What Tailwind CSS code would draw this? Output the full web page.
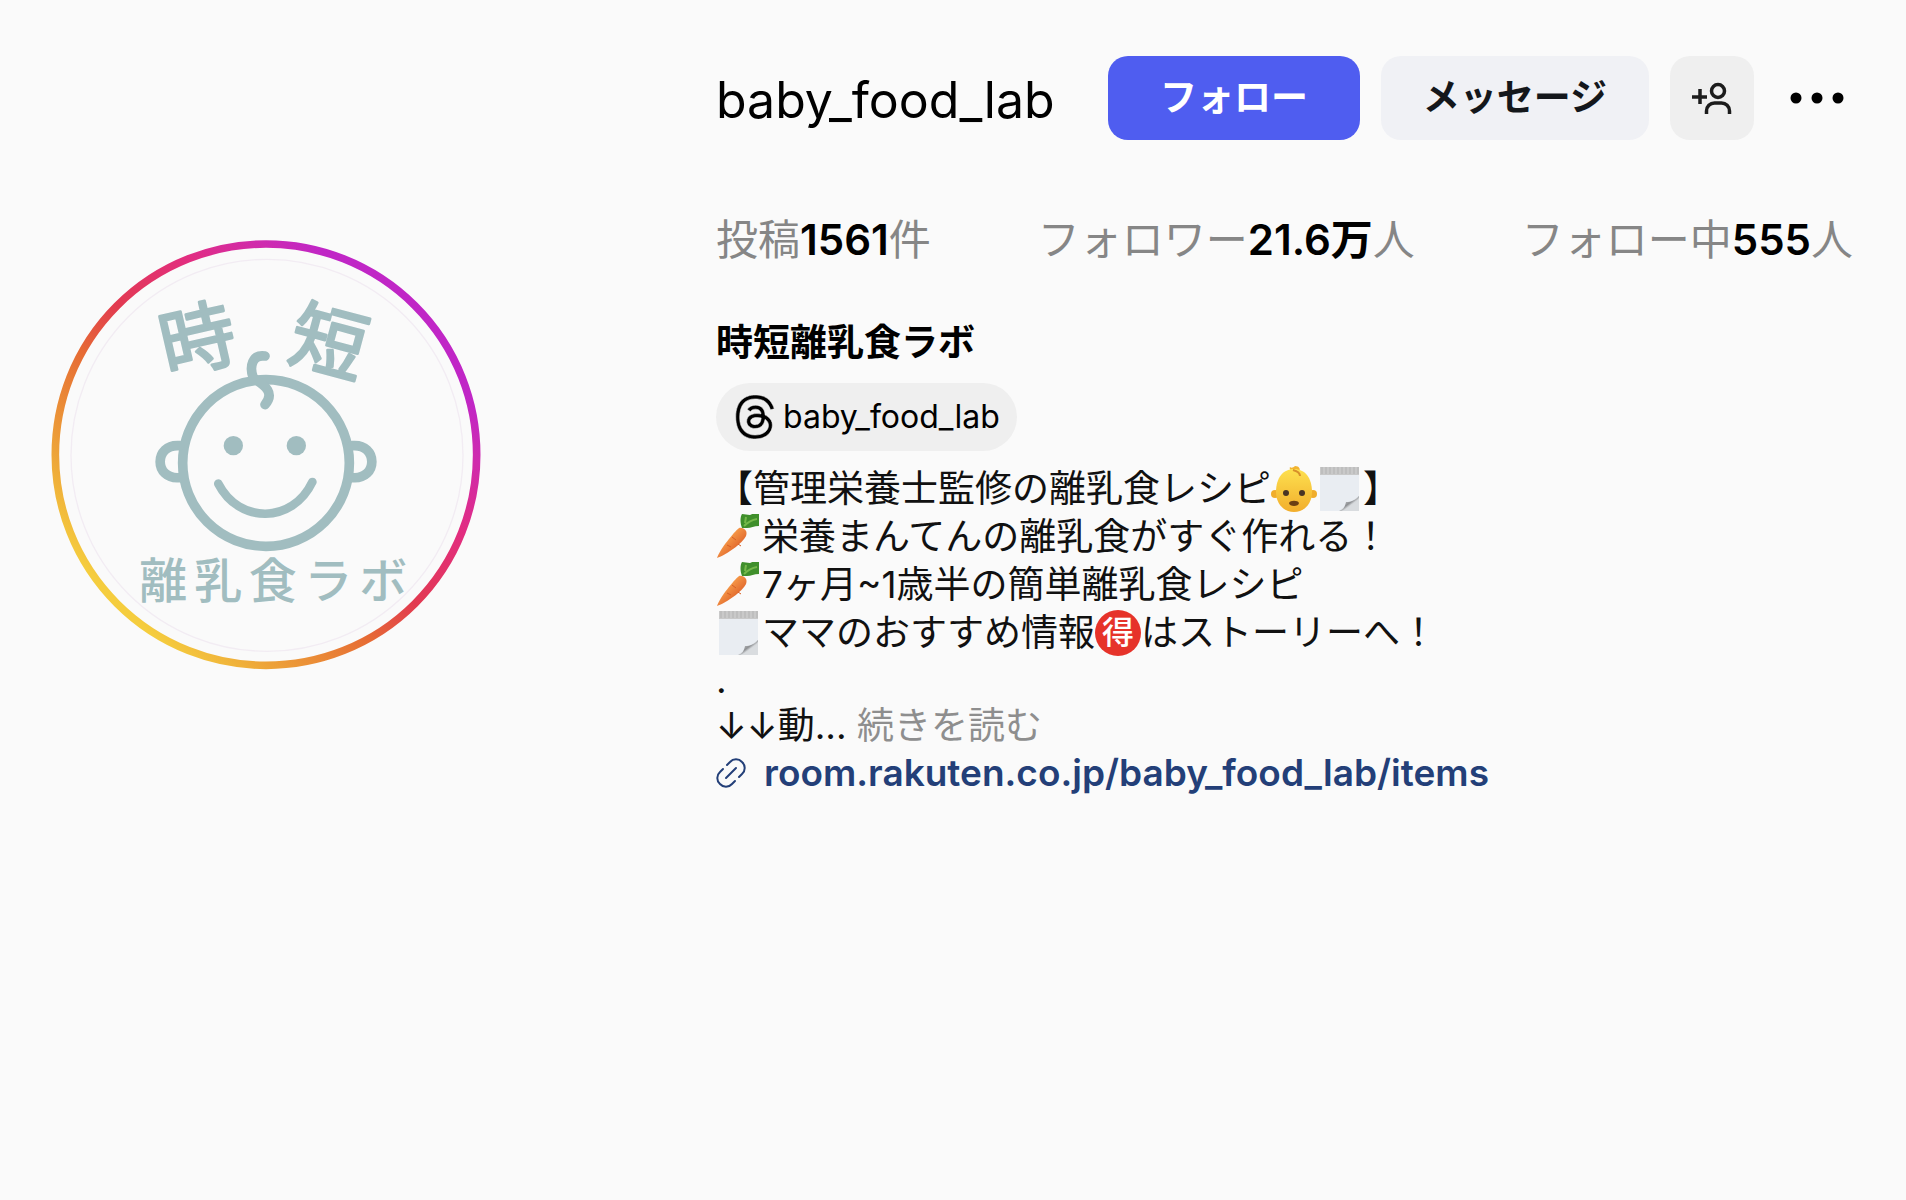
<!DOCTYPE html>
<html lang="ja">
<head>
  <meta charset="UTF-8">
  <meta name="viewport" content="width=device-width, initial-scale=1.0">
  <title>時短離乳食ラボ (@baby_food_lab)</title>
  <script src="https://cdn.jsdelivr.net/npm/@tailwindcss/browser@4"></script>
</head>
<body class="bg-[#fafafa] text-black min-h-screen font-['Inter','Noto_Sans_CJK_JP',sans-serif]">

  <!-- Shared icons -->
  <svg width="0" height="0" class="absolute" aria-hidden="true">
    <defs>
      <linearGradient id="carrotBody" x1="0" y1="0" x2="1" y2="1">
        <stop offset="0.3" stop-color="#f9a04c" />
        <stop offset="0.7" stop-color="#e0662c" />
      </linearGradient>
      <linearGradient id="babySkin" x1="0" y1="0" x2="0" y2="1">
        <stop offset="0" stop-color="#fde04f" />
        <stop offset="1" stop-color="#f2ae2c" />
      </linearGradient>
      <linearGradient id="curl" x1="0" y1="0" x2="1" y2="1">
        <stop offset="0" stop-color="#ffffff" />
        <stop offset="0.5" stop-color="#8e9093" />
        <stop offset="0.6" stop-color="#d5d8db" />
      </linearGradient>
      <symbol id="carrot" viewBox="0 0 46 46">
        <path d="M1 44C4 35 18 18 23 14c5-1 9 3 7 8C27 29 10 41 1 44Z" fill="url(#carrotBody)" />
        <path d="M16 23l4 3M11 31l4 2M22 30l3 2" stroke="#d65f26" stroke-width="1" />
        <path d="M26 14C24 9 24 3 26 0c3 0 5 1 8 1 3-2 6-1 9-1v12c-5 0-8 2-12 2Z" fill="#3f8f2b" />
        <path d="M28 12c3-3 7-6 13-7M29 9l1-6" stroke="#75b84a" stroke-width="2" fill="none" />
      </symbol>
      <symbol id="notepad" viewBox="0 0 46 46">
        <path d="M3 1h39v44H3Z" fill="#e9edf2" />
        <path d="M3 1h39v8H3Z" fill="#c9c9c9" />
        <path d="M5 1v7M9 1v7M13 1v7M17 1v7M21 1v7M25 1v7M29 1v7M33 1v7M37 1v7M41 1v7" stroke="#b3b3b3" stroke-width="1" />
        <path d="M42 30v15H22Z" fill="#d9dcdf" />
        <path d="M22 45c5-1 6-5 7-9 5 0 10-2 13-6 0 4-2 6-6 8-4 3-8 7-14 7Z" fill="url(#curl)" />
      </symbol>
      <symbol id="baby" viewBox="0 0 46 46">
        <path d="M23 5c-3 0-5-2-4-4 1 1 3 1 5-1 4 0 6 3 4 6Z" fill="#f2b430" />
        <circle cx="4" cy="28" r="4" fill="#f0ad2c" />
        <circle cx="42" cy="28" r="4" fill="#f0ad2c" />
        <path d="M23 3c11 0 18 9 18 23 0 12-8 20-18 20S5 38 5 26C5 12 12 3 23 3Z" fill="url(#babySkin)" />
        <path d="M22 4c4 1 7 3 7 6" stroke="#d8902a" stroke-width="2" fill="none" />
        <ellipse cx="15" cy="27" rx="3" ry="3" fill="#4a3424" />
        <ellipse cx="31" cy="27" rx="3" ry="3" fill="#4a3424" />
        <path d="M18 37c1-3 9-3 10 0 0 4-10 4-10 0Z" fill="#6b3f14" />
      </symbol>
    </defs>
  </svg>

  <main class="grid grid-cols-[665px_1fr] pt-14 pl-[51px] pr-[53px]">

    <!-- Avatar with story ring -->
    <a href="#" class="block mt-[184px]">
      <svg viewBox="36 60 1290 1290" class="size-[430px]" role="img" aria-label="時短離乳食ラボのプロフィール写真">
        <defs>
          <linearGradient id="storyRing" x1="0.15" y1="0.85" x2="0.85" y2="0.15">
            <stop offset="0" stop-color="#f5cd3e" />
            <stop offset="0.15" stop-color="#eda238" />
            <stop offset="0.36" stop-color="#e66b34" />
            <stop offset="0.5" stop-color="#e23a50" />
            <stop offset="0.7" stop-color="#e22d80" />
            <stop offset="0.85" stop-color="#cf2bae" />
            <stop offset="0.94" stop-color="#c026c6" />
          </linearGradient>
        </defs>
        <circle cx="681" cy="704" r="632" fill="none" stroke="url(#storyRing)" stroke-width="23" />
        <circle cx="684" cy="706" r="588" fill="none" stroke="#f2ecf3" stroke-width="4" />
        <g fill="none" stroke="#a1bdc0" stroke-width="29" stroke-linecap="round">
          <circle cx="681" cy="729" r="250" />
          <path d="M422 677C344 670 344 780 422 773" />
          <path d="M940 677C1018 670 1018 780 940 773" />
          <path d="M678 408C640 402 630 440 643 474 668 492 712 514 678 554" />
          <path d="M538 791C600 912 760 912 820 786" stroke-width="26" />
        </g>
        <circle cx="583" cy="677" r="29" fill="#a1bdc0" />
        <circle cx="772" cy="677" r="29" fill="#a1bdc0" />
        <g fill="#a1bdc0" text-anchor="middle" class="font-['Noto_Sans_CJK_JP',sans-serif]">
          <g class="font-normal" font-size="226" stroke="#a1bdc0" stroke-width="8" stroke-linejoin="round">
            <text x="476" y="440" transform="rotate(-13 476 358)">時</text>
            <text x="870" y="447" transform="rotate(15 870 366)">短</text>
          </g>
          <g class="font-medium" font-size="144">
            <text x="373" y="1134">離</text>
            <text x="538" y="1134">乳</text>
            <text x="701" y="1134">食</text>
            <text x="868" y="1134">ラ</text>
            <text x="1033" y="1134">ボ</text>
          </g>
        </g>
      </svg>
    </a>

    <section>
      <!-- Username and actions -->
      <div class="flex items-center justify-between">
        <h1 class="pt-1 text-[50px] leading-[60px]">baby_food_lab</h1>
        <div class="flex items-center gap-[21px]">
          <button type="button" class="w-[252px] h-[84px] rounded-[20px] bg-[#4f5df0] text-white text-[37px] font-bold">フォロー</button>
          <button type="button" class="w-[268px] h-[84px] rounded-[20px] bg-[#f0f1f5] text-[#14171b] text-[37px] font-bold">メッセージ</button>
          <button type="button" aria-label="おすすめのアカウント" class="size-[84px] rounded-[20px] bg-[#efefef] flex items-center justify-center">
            <svg viewBox="0 0 40 36" class="w-10 h-9" fill="none" stroke="#1c1c1c" stroke-width="3.5">
              <path d="M0 17h15M8 9v15" />
              <circle cx="26" cy="11" r="6.5" />
              <path d="M14.5 34v-3a8 8 0 0 1 8-8h7a8 8 0 0 1 8 8v3" />
            </svg>
          </button>
          <button type="button" aria-label="オプション" class="w-[78px] h-[84px] pl-[6px] flex items-center justify-center">
            <svg viewBox="0 0 54 12" class="w-[54px] h-3">
              <circle cx="6" cy="6" r="5.5" />
              <circle cx="27" cy="6" r="5.5" />
              <circle cx="48" cy="6" r="5.5" />
            </svg>
          </button>
        </div>
      </div>

      <!-- Counts -->
      <ul class="flex justify-between mt-[75px] text-[42px] leading-[50px] text-[#868686]">
        <li>投稿<span class="font-semibold text-black">1561</span>件</li>
        <li><a href="#">フォロワー<span class="font-semibold text-black">21.6万</span>人</a></li>
        <li><a href="#">フォロー中<span class="font-semibold text-black">555</span>人</a></li>
      </ul>

      <!-- Bio -->
      <h2 class="mt-[54px] text-[37px] leading-12 font-bold">時短離乳食ラボ</h2>
      <a href="#" class="mt-4 inline-flex items-center gap-[6px] h-[68px] px-[17px] rounded-full bg-[#efefef] text-[32px]">
        <svg viewBox="0 0 16 16" class="size-11" stroke="#efefef" stroke-width="0.2" aria-hidden="true">
          <path d="M6.321 6.016c-.27-.18-1.166-.802-1.166-.802.756-1.081 1.753-1.502 3.132-1.502.975 0 1.803.327 2.394.948s.928 1.509 1.005 2.644q.492.207.905.484c1.109.745 1.719 1.86 1.719 3.137 0 2.716-2.226 5.075-6.256 5.075C4.594 16 1 13.987 1 7.994 1 2.034 4.482 0 8.044 0 9.69 0 13.55.243 15 5.036l-1.36.353C12.516 1.974 10.163 1.43 8.006 1.43c-3.565 0-5.582 2.171-5.582 6.79 0 4.143 2.254 6.343 5.63 6.343 2.777 0 4.847-1.443 4.847-3.556 0-1.438-1.208-2.127-1.27-2.127-.236 1.234-.868 3.31-3.644 3.31-1.618 0-3.013-1.118-3.013-2.582 0-2.09 1.984-2.847 3.55-2.847.586 0 1.294.04 1.663.114 0-.637-.54-1.728-1.9-1.728-1.25 0-1.566.405-1.967.868ZM8.716 8.19c-2.04 0-2.304.87-2.304 1.416 0 .878 1.043 1.168 1.6 1.168 1.02 0 2.067-.282 2.232-2.423a6.2 6.2 0 0 0-1.528-.161" />
        </svg>
        baby_food_lab
      </a>

      <div class="mt-[14px] text-[37px] leading-12 text-[#111]">
        <p class="flex items-center">【管理栄養士監修の離乳食レシピ<svg class="size-[46px]" role="img" aria-label="赤ちゃん"><use href="#baby" /></svg><svg class="size-[46px]" role="img" aria-label="メモ帳"><use href="#notepad" /></svg>】</p>
        <p class="flex items-center"><svg class="size-[46px]" role="img" aria-label="にんじん"><use href="#carrot" /></svg>栄養まんてんの離乳食がすぐ作れる！</p>
        <p class="flex items-center"><svg class="size-[46px]" role="img" aria-label="にんじん"><use href="#carrot" /></svg>7ヶ月~1歳半の簡単離乳食レシピ</p>
        <p class="flex items-center"><svg class="size-[46px]" role="img" aria-label="メモ帳"><use href="#notepad" /></svg>ママのおすすめ情報<span class="size-[46px] rounded-full bg-[#e6332a] text-white text-[32px] font-medium flex items-center justify-center">得</span>はストーリーへ！</p>
        <p class="leading-[46px]">.</p>
        <p class="leading-[46px]">↓↓動... <button type="button" class="text-[#8e8e8e]">続きを読む</button></p>
      </div>
      <a href="#" class="flex items-center gap-[18px] text-[37px] leading-12 font-semibold text-[#233f78]">
        <svg viewBox="0 0 30 30" class="size-[30px]" fill="none" stroke="#233f78" stroke-width="2" stroke-linecap="round" aria-hidden="true">
          <path d="M10 20 20 10" />
          <path d="M11 7l3-3a8 8 0 0 1 12 0 8 8 0 0 1 0 12l-3 3" />
          <path d="M19 23l-3 3a8 8 0 0 1-12 0 8 8 0 0 1 0-12l3-3" />
        </svg>
        room.rakuten.co.jp/baby_food_lab/items
      </a>
    </section>
  </main>

</body>
</html>
